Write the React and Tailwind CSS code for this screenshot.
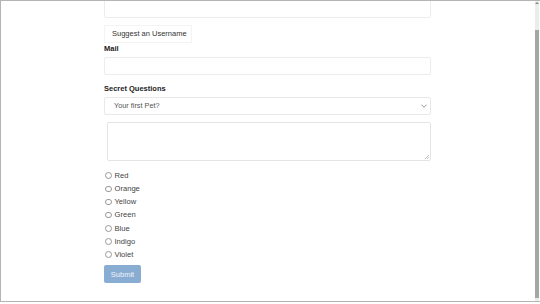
import React from "react";

const colors = ["Red", "Orange", "Yellow", "Green", "Blue", "Indigo", "Violet"];

export default function App() {
  return (
    <div className="w-[540px] h-[304px] bg-white overflow-hidden font-['Liberation_Sans',Arial,sans-serif]">
      <div className="flex h-[302px] border-t border-l border-b border-[#b4b4b4]">
        {/* Page content */}
        <div className="flex-1 pl-[103px]">
          <div className="w-[327px] flex flex-col">
            {/* Clipped field at the top */}
            <div className="h-[17px] border-x border-b border-[#ececec] rounded-b-[2px]" />

            <button className="mt-[7px] self-start h-[18px] w-[88px] pl-[7px] text-left border border-[#f4f4f4] bg-white text-[7.5px] text-[#333] leading-none">
              Suggest an Username
            </button>

            <label className="mt-0 text-[7.5px] leading-[11px] font-bold text-[#222]">Mail</label>
            <div className="mt-[3px] h-[18px] border border-[#ececec] rounded-[2px]" />

            <label className="mt-[8px] text-[7.5px] leading-[11px] font-bold text-[#222]">Secret Questions</label>
            <div className="mt-[3px] h-[18px] border border-[#e8e8e8] rounded-[2px] flex items-center justify-between pl-[9px] pr-[3px]">
              <span className="text-[7.3px] text-[#555]">Your first Pet?</span>
              <svg width="6" height="4" viewBox="0 0 6 4" className="text-[#888]">
                <path d="M0.5 0.8 L3 3.2 L5.5 0.8" fill="none" stroke="currentColor" strokeWidth="0.9" />
              </svg>
            </div>

            <div className="mt-[7px] ml-[3px] h-[39px] border border-[#e4e4e4] rounded-[2px] relative">
              <svg width="4" height="4" viewBox="0 0 4 4" className="absolute right-[1px] bottom-[1px] text-[#aaa]">
                <path d="M0 4 L4 0 M2 4 L4 2" stroke="currentColor" strokeWidth="0.7" />
              </svg>
            </div>

            <div className="mt-[8px] flex flex-col">
              {colors.map((c) => (
                <div key={c} className="h-[13.2px] flex items-center">
                  <span className="w-[6.5px] h-[6.5px] rounded-full border border-[#999] bg-white ml-[1px]" />
                  <span className="ml-[3px] text-[7.6px] text-[#444] leading-none">{c}</span>
                </div>
              ))}
            </div>

            <button className="mt-[4px] self-start h-[18px] w-[37px] rounded-[2px] bg-[#88acd2] text-[#eef4fb] text-[7.5px] leading-none">
              Submit
            </button>
          </div>
        </div>

        {/* Scrollbar */}
        <div className="w-[4px] mr-[1px] bg-[#ececec] flex flex-col items-stretch">
          <div className="h-[3px] mt-[1px] flex justify-center">
            <div className="w-0 h-0 border-l-[2px] border-r-[2px] border-b-[2px] border-l-transparent border-r-transparent border-b-[#888]" />
          </div>
          <div className="mt-[25px] flex-1 mb-[3px] bg-[#a6a6a6]" />
        </div>
      </div>
    </div>
  );
}
